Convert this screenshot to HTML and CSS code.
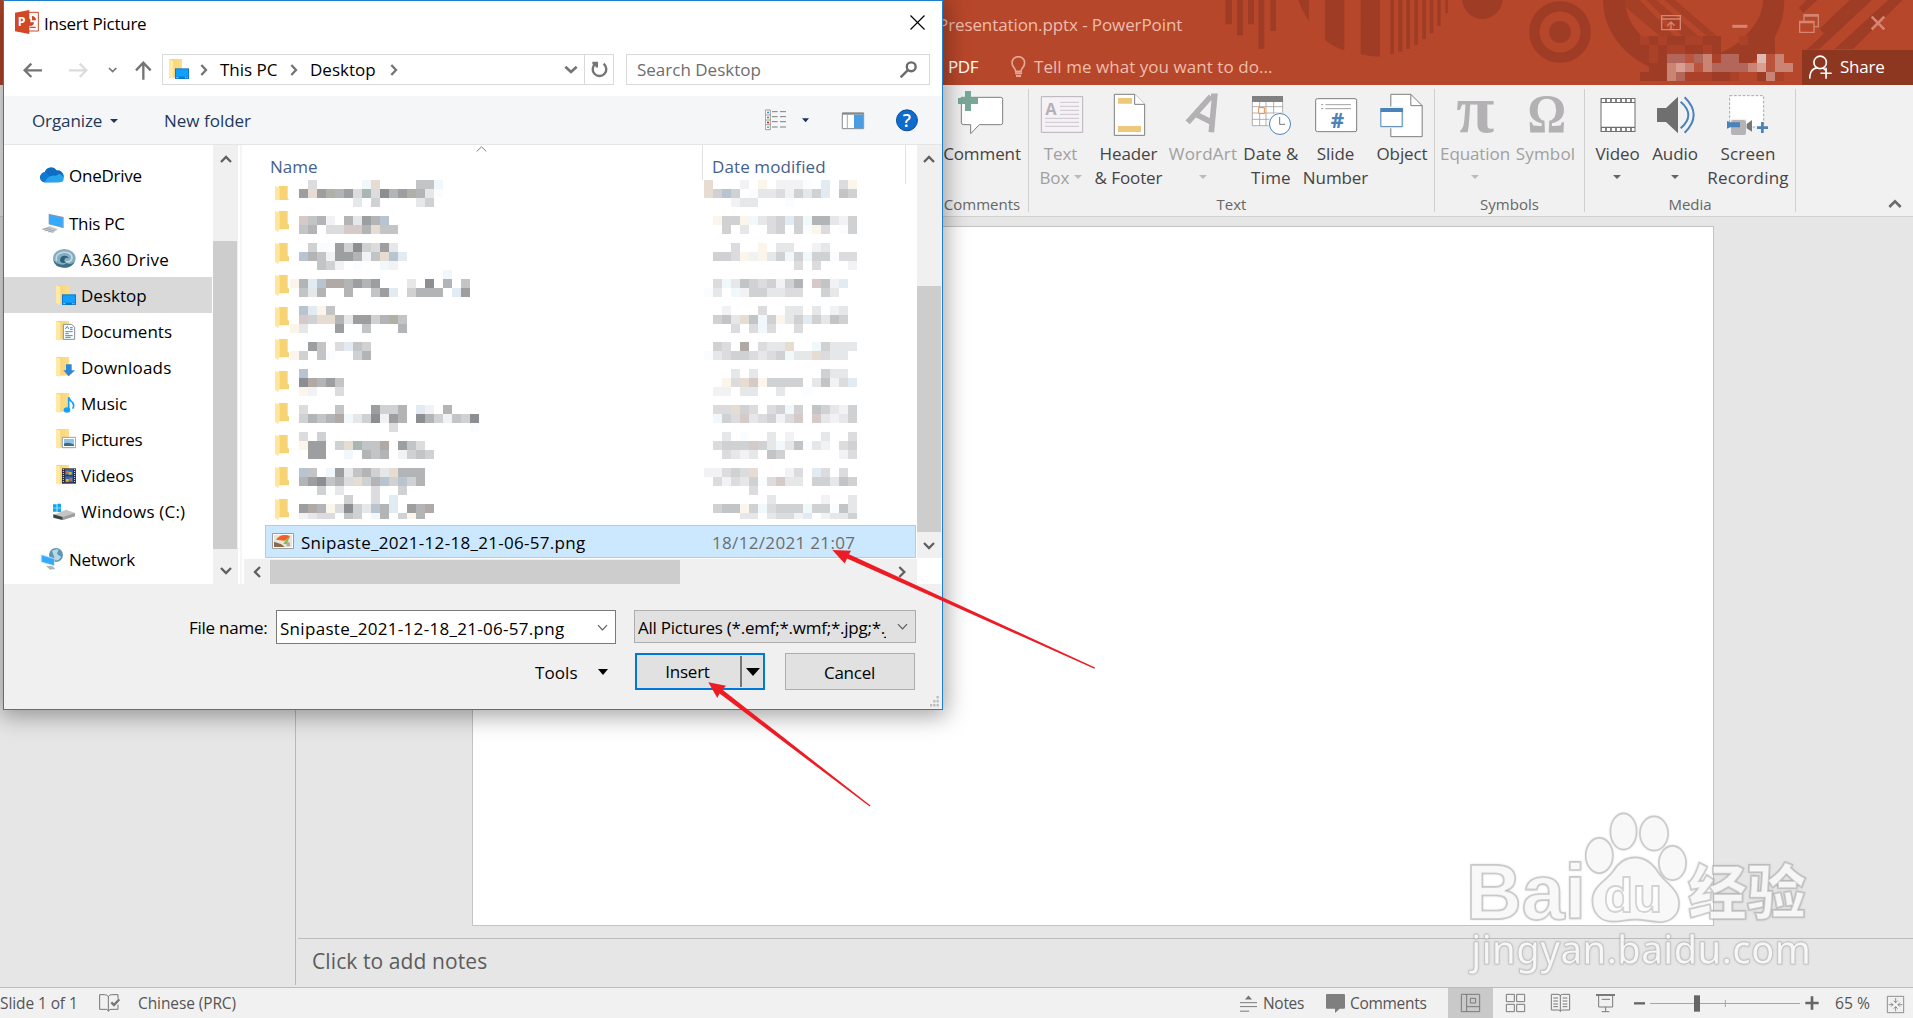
FILE: index.html
```html
<!DOCTYPE html>
<html lang="en">
<head>
<meta charset="utf-8">
<title>Presentation.pptx - PowerPoint</title>
<link rel="stylesheet" href="styles.css">
</head>
<body>
<svg class="defs" aria-hidden="true">
  <defs>
    <linearGradient id="fold" x1="0" x2="1"><stop offset="0" stop-color="#f6cf6c"/><stop offset="1" stop-color="#fcdf8c"/></linearGradient>
    <symbol id="folder" viewBox="0 0 72 72"><path d="M12 6h39v56H12z" fill="url(#fold)"/><path d="M12 6l13 5v46l-3 9-10-6z" fill="#ffe9a8"/></symbol>
    <symbol id="row-folder" viewBox="0 0 42 63"><path d="M11 0h27v37l4 5v13H11z" fill="#f8d374"/><path d="M0 0l14 5v46l-4 12-10-7z" fill="#ffe6a0"/></symbol>
    <symbol id="desk" viewBox="0 0 72 72"><use href="#folder"/><path d="M30 34h42v32H30z" fill="#0a78d0"/><path d="M33 37h36v22H33z" fill="#12a0ff"/><path d="M34 62h6M60 62h3M65 62h3" stroke="#fff" stroke-width="2"/></symbol>
    <symbol id="chev" viewBox="0 0 36 36"><path d="M3 24L18 9l15 15" fill="none" stroke="#606060" stroke-width="7"/></symbol>
    <symbol id="thin" viewBox="0 0 30 20"><path d="M2 3l13 14L28 3" fill="none" stroke="#555" stroke-width="3"/></symbol>
  </defs>
</svg>

<div class="app">
  <header class="titlebar">
    <svg class="pattern" viewBox="2820 0 2919 255">
      <g fill="#9f3c25" transform="translate(2820 0)">
        <path d="M856 0h20v73h-20zM891 0h18v106h-18zM924 0h18v73h-18zM955 0h18v146h-18zM991 0h17v93h-17z"/>
        <path d="M1075 0h32v62q-20-24-32-62zM1155 0h58v151q-36-12-58-32zM1262 0h58v170q-30 0-58-7z"/>
        <path d="M1351 0h11v163h-11zM1375 0h12v155h-12zM1399 0h11v146h-11zM1423 0h11v134h-11zM1447 0h11v118h-11zM1469 0h11v100h-11zM1492 0h10v78h-10zM1516 0h8v40h-8z"/>
      </g>
      <g transform="translate(4269 0)" fill="#9f3c25">
        <path d="M117 0h122c-4 34-30 57-61 57S121 34 117 0z"/>
        <circle cx="411" cy="96" r="77" fill="none" stroke="#9f3c25" stroke-width="31"/>
        <circle cx="411" cy="96" r="33"/>
        <path d="M540 0h66c2 60 40 110 90 138 90 50 200 40 260-20 40-36 64-76 64-118h64c0 100-60 170-130 210H700C600 170 540 90 540 0z"/>
        <path d="M606 20l130 110h40L650 0h20l120 120h50L700 0h24l130 110h30L756 0h-150z" opacity=".75"/>
        <path d="M1127 24l24-24h32l-42 38zM1190 86l90-86h38L1206 104zM1150 150L1312 0h35L1190 146zM1235 147L1395 0h44L1290 147z"/>
      </g>
    </svg>
    <div class="caption">
      <span class="doc-name">Presentation.pptx - PowerPoint</span>
      <svg class="winctl" viewBox="2130 30 750 81" fill="none" stroke="#d58673" stroke-width="4">
        <path d="M2132 47h56v42h-56zM2132 57h56M2160 88V68M2149 77l11-11 11 11"/>
        <path d="M2344 79h45" stroke-width="9"/>
        <path d="M2546 64h43v33h-43zM2546 68h43M2559 64V44h43v36h-12M2559 48h43"/>
        <path d="M2762 50l38 38M2800 50l-38 38" stroke-width="8"/>
      </svg>
    </div>
    <nav class="tabs">
      <span class="tab">PDF</span>
      <svg class="bulb" viewBox="0 0 45 66" fill="none" stroke="#e3a795" stroke-width="5"><path d="M14 46C14 36 3 34 3 20a19 18 0 0 1 38 0c0 14-11 16-11 26z"/><path d="M12 52h21M15 60h15" stroke-width="6"/></svg>
      <span class="tell">Tell me what you want to do...</span>
      <div class="share">
        <svg viewBox="0 0 70 72" fill="none" stroke="#fff" stroke-width="5"><circle cx="34" cy="22" r="19"/><path d="M2 72c0-20 10-32 24-34M42 38l8 8M52 38v34M35 55h34"/></svg>
        <span>Share</span>
      </div>
    </nav>
    <svg class="mosaic account" id="account"></svg>
  </header>

  <section class="ribbon">
    <div class="group g-comments">
      <div class="tools">
        <div class="tool"><svg viewBox="54 264 144 144"><path d="M70 292h112q6 0 6 6v70q0 6-6 6h-64l-26 27v-27H71q-7 0-7-6v-76z" fill="#fff" stroke="#7d7d7d" stroke-width="3"/><path d="M75 273h18v21h21v18H93v21H75v-21H54v-18h21z" fill="#79a898"/></svg><span>Comment</span></div>
      </div>
      <div class="glabel">Comments</div>
    </div>
    <div class="group g-text">
      <div class="tools">
        <div class="tool off"><svg viewBox="291 264 144 144"><path d="M304 290h124v107H304z" fill="#f6f1f6" stroke="#b6b2b6" stroke-width="3"/><path d="M360 307h57M360 319h57M360 331h57M360 343h57M315 355h102M315 367h102M315 379h102" stroke="#cac6ca" stroke-width="3"/><text x="316" y="344" font-size="50" font-weight="700" textLength="34" lengthAdjust="spacingAndGlyphs" fill="#b3b1b3">A</text></svg><span>Text<br>Box <i class="tri"></i></span></div>
        <div class="tool"><svg viewBox="495 264 144 144"><path d="M523 283h61l30 30v93h-91z" fill="#fff" stroke="#7d7d7d" stroke-width="3"/><path d="M584 283v30h30" fill="#fff" stroke="#7d7d7d" stroke-width="3"/><path d="M534 294h42v17h-42zM534 378h69v18h-69z" fill="#edc77b"/></svg><span>Header<br>&amp; Footer</span></div>
        <div class="tool off wide"><svg viewBox="720 264 144 144"><path d="M813 289l-70 78M813 289h11l-10 108M766 342l55 28" fill="none" stroke="#b3b1b3" stroke-width="17"/></svg><span>WordArt<br><i class="tri"></i></span></div>
        <div class="tool wide"><svg viewBox="924 264 144 144"><path d="M937 300h91v77h-91z" fill="#fff"/><path d="M937 305v72h50M959 300v77M978 300v77M1001 300v40M1028 300v40M937 320h91M937 339h91M937 358h60" fill="none" stroke="#a0a0a0" stroke-width="2.500"/><path d="M936 288h93v18h-93z" fill="#808080"/><path d="M956 323h17v17h-17z" fill="#fff" stroke="#e58a3c" stroke-width="3"/><circle cx="1020" cy="372" r="35" fill="#f1f1f1"/><circle cx="1020" cy="372" r="31.500" fill="#fff" stroke="#4a85bd" stroke-width="3"/><path d="M1019 351v22h16" fill="none" stroke="#777" stroke-width="3"/></svg><span>Date &amp;<br>Time</span></div>
        <div class="tool"><svg viewBox="1116 264 144 144"><rect x="1127" y="296" width="123" height="99" rx="5" fill="#fff" stroke="#7d7d7d" stroke-width="3"/><path d="M1143 314h7M1143 326h7M1156 314h77M1156 326h77" stroke="#a3a3a3" stroke-width="3"/><text x="1172" y="383" font-size="62" font-weight="700" textLength="40" lengthAdjust="spacingAndGlyphs" fill="#4a82ba">#</text></svg><span>Slide<br>Number</span></div>
        <div class="tool"><svg viewBox="1315.500 264 144 144"><path d="M1351 283h60l34 34v93h-94z" fill="#fff" stroke="#7d7d7d" stroke-width="3"/><path d="M1411 283v34h34" fill="none" stroke="#7d7d7d" stroke-width="3"/><path d="M1316 319h75v66h-75z" fill="#f1f1f1"/><path d="M1321 326h64v54h-64z" fill="#fff" stroke="#4a82ba" stroke-width="3"/><path d="M1320 324h67v12h-67z" fill="#4a82ba"/></svg><span>Object</span></div>
      </div>
      <div class="glabel">Text</div>
    </div>
    <div class="group g-symbols">
      <div class="tools">
        <div class="tool off"><svg viewBox="85.500 264 144 144"><text class="serif" x="98" y="396" font-size="205" textLength="114" lengthAdjust="spacingAndGlyphs">π</text></svg><span>Equation<br><i class="tri"></i></span></div>
        <div class="tool off wide"><svg viewBox="298.500 264 144 144"><text class="serif" x="312" y="396" font-size="166" textLength="116" lengthAdjust="spacingAndGlyphs">Ω</text></svg><span>Symbol</span></div>
      </div>
      <div class="glabel">Symbols</div>
    </div>
    <div class="group g-media">
      <div class="tools">
        <div class="tool"><svg viewBox="511.500 264 144 144"><path d="M531 294h105v102H531z" fill="#6f6f6f"/><path d="M534 309h99v71h-99z" fill="#fff"/><path d="M535 301.500h98M535 388.500h98" stroke="#fff" stroke-width="9" stroke-dasharray="10 5"/></svg><span>Video<br><i class="tri"></i></span></div>
        <div class="tool"><svg viewBox="684 264 144 144"><path d="M702 324h27l36-34v110l-36-34h-27z" fill="#6f6f6f"/><path d="M773 305q46 40 0 80M785 292q54 53 0 106" fill="none" stroke="#4a82ba" stroke-width="6"/></svg><span>Audio<br><i class="tri"></i></span></div>
        <div class="tool wide"><svg viewBox="903 264 144 144"><path d="M920 287h102v94H920z" fill="#fff" stroke="#a8a8a8" stroke-width="3" stroke-dasharray="8 5"/><path d="M923 356h48v50h-48zM985 385h48v20h-48z" fill="#f1f1f1"/><path d="M930 360h33q6 0 6 6v33q0 6-6 6h-33q-6 0-6-6v-33q0-6 6-6z" fill="#b5b3b5"/><path d="M971 372l16-12v35l-16-10z" fill="#777"/><path d="M912 363l10 4h29v15h-29l-10 4z" fill="#4a82ba"/><path d="M1018 366v33M1002 383h33" stroke="#4a82ba" stroke-width="8"/></svg><span>Screen<br>Recording</span></div>
      </div>
      <div class="glabel">Media</div>
    </div>
    <svg class="collapse" viewBox="0 0 40 27"><path d="M3 24L20 7l17 17" fill="none" stroke="#6a6a6a" stroke-width="8"/></svg>
  </section>

  <main class="workspace">
    <aside class="thumbs"></aside>
    <section class="editor">
      <div class="stage"><div class="slide"></div></div>
      <div class="notes">Click to add notes</div>
    </section>
  </main>

  <footer class="status">
    <span class="s-slide">Slide 1 of 1</span>
    <svg class="s-spell" viewBox="0 0 63 54" fill="none" stroke="#757575" stroke-width="3"><path d="M28 50V8Q24 2 16 2H2v44h20q4 0 6 6 2-6 8-6h21V32M28 8q3-6 10-6h19v12"/><path d="M37 25l8 8 16-17" stroke-width="7"/></svg>
    <span class="s-lang">Chinese (PRC)</span>
    <svg class="s-notes" viewBox="0 0 52 51"><path d="M15 13L26 1l11 12z" fill="#757575"/><path d="M0 23h52M0 35h52M0 49h28" stroke="#757575" stroke-width="3"/></svg>
    <span class="s-n">Notes</span>
    <svg class="s-com" viewBox="0 0 57 57"><path d="M3 0h51q3 0 3 3v38q0 3-3 3H41L27 57V44H3q-3 0-3-3V3q0-3 3-3z" fill="#7f7f7f"/></svg>
    <span class="s-c">Comments</span>
    <svg class="views" viewBox="144 24 1395 90" fill="none" stroke="#7a7a7a" stroke-width="3">
      <path d="M144 24h135v90H144z" fill="#c9c9c9" stroke="none"/>
      <path d="M184 43h55v52h-55zM200 43v52M200 80h39M211 55h16v14h-16z"/>
      <path d="M319 43h24v22h-24zM350 43h24v22h-24zM319 73h24v22h-24zM350 73h24v22h-24z"/>
      <path d="M454 43h20q7 0 7 5 0-5 7-5h21v47h-22q-6 0-6 5 0-5-6-5h-21zM481 48v44M460 54h14M460 63h14M460 72h14M460 80h14M488 54h14M488 63h14M488 72h14M488 80h14"/>
      <path d="M596 46v35h42V46M617 81v14M605 95h23M605 58h25"/><path d="M588 45h57" stroke-width="6"/>
      <path d="M702 70h33" stroke="#666" stroke-width="7"/><path d="M750 70.500h450M976 60v21" stroke="#a6a6a6"/>
      <path d="M882 46h18v49h-18z" fill="#666" stroke="none"/>
      <path d="M1216 69h40M1236 49v40" stroke="#666" stroke-width="8"/>
      <path d="M1462 49h49v49h-49zM1487 54v14M1487 80v14M1466 74h13M1494 74h13M1481 62l6 6 6-6M1481 86l6-6 6 6M1473 68l6 6-6 6M1500 68l-6 6 6 6" stroke-width="2.500"/>
      <text x="1305" y="87" font-size="48" fill="#555" stroke="none" textLength="105" lengthAdjust="spacingAndGlyphs">65 %</text>
    </svg>
  </footer>
</div>

<div class="dialog">
  <div class="d-title">
    <svg class="pp" viewBox="0 0 72 72"><path d="M36 7h34v56H36z" fill="#fff" stroke="#d24726" stroke-width="3"/><path d="M46 26a11 11 0 1 0 11 11H46z" fill="#d24726"/><path d="M51 18v13h12a12 12 0 0 0-12-13zM44 50h18v4H44z" fill="#d24726"/><path d="M0 8L43 0v72L0 64z" fill="#d24726"/><text x="8" y="49" font-size="37" font-weight="700" fill="#fff">P</text></svg>
    <span>Insert Picture</span>
    <svg class="close" viewBox="0 0 15 15"><path d="M.5.500l14 14M14.500.500l-14 14" stroke="#000" stroke-width="1.200"/></svg>
  </div>
  <div class="d-nav">
    <svg class="arrows" viewBox="60 180 405 66" fill="none" stroke="#757575" stroke-width="7"><path d="M126 211H74M94 191l-20 20 20 20"/><path d="M207 211h52M239 191l20 20-20 20" stroke="#dcdcdc"/><path d="M327 204l11 11 11-11" stroke-width="5"/><path d="M430 239v-50M408 211l22-23 22 23"/></svg>
    <div class="address">
      <svg class="loc" viewBox="12 6 60 60"><use href="#desk" width="72" height="72"/></svg>
      <svg class="gt" viewBox="0 0 24 36"><path d="M4 3l14 15L4 33" fill="none" stroke="#757575" stroke-width="7"/></svg>
      <span class="c1">This PC</span>
      <svg class="gt" viewBox="0 0 24 36"><path d="M4 3l14 15L4 33" fill="none" stroke="#757575" stroke-width="7"/></svg>
      <span class="c2">Desktop</span>
      <svg class="gt" viewBox="0 0 24 36"><path d="M4 3l14 15L4 33" fill="none" stroke="#757575" stroke-width="7"/></svg>
      <svg class="drop" viewBox="0 0 42 30"><path d="M4 5l17 16L38 5" fill="none" stroke="#757575" stroke-width="8"/></svg>
      <div class="refresh"><svg viewBox="0 0 50 50"><path d="M37 8a20 20 0 1 1-24 0M4 6h13v13" fill="none" stroke="#757575" stroke-width="7"/></svg></div>
    </div>
    <div class="search"><span>Search Desktop</span><svg viewBox="0 0 50 50" fill="none" stroke="#6b6b6b"><circle cx="33" cy="17" r="13" stroke-width="7"/><path d="M23 27L2 48" stroke-width="7"/></svg></div>
  </div>
  <div class="d-bar">
    <span class="org">Organize</span><i class="tri dark"></i><span class="newf">New folder</span>
    <svg class="layout" viewBox="885 320 460 72"><path d="M886 326h15v59h-15zM886 341h15M886 356h15M886 370h15" fill="#fff" stroke="#9a9a9a" stroke-width="3"/><path d="M906 331h17M930 331h18M906 346h17M930 346h18M906 361h17M930 361h18M906 377h17M930 377h18" stroke="#7d7d7d" stroke-width="3"/><path d="M891 331h6v5h-6z" fill="#3a8de0"/><path d="M891 346h6v5h-6z" fill="#6b9a2a"/><path d="M891 361h6v5h-6z" fill="#c22"/><path d="M891 375h6v5h-6z" fill="#7a9"/><path d="M996 351h21l-10 12z" fill="#1b2f5b"/><path d="M1117 335h64v47h-64z" fill="#fff" stroke="#888" stroke-width="3"/><path d="M1117 334h64v6h-64z" fill="#888"/><path d="M1132 338v44" stroke="#aaa" stroke-width="3"/><path d="M1152 340h27v41h-27z" fill="#4a9de2"/><circle cx="1311" cy="357" r="31.500" fill="#0d6ccd" stroke="#0a4a92" stroke-width="3"/><text x="1298" y="377" font-size="54" fill="#fff" font-weight="600">?</text></svg>
  </div>
  <div class="d-body">
    <ul class="tree">
      <li><svg viewBox="0 0 72 72"><path d="M16 58a15 15 0 0 1-2-30A20 20 0 0 1 50 22a18 18 0 0 1 6 36z" fill="#0f6cc0"/><path d="M12 58a16 16 0 0 1 4-31l30 30z" fill="#0f7ad6"/><path d="M14 58q10-24 34-20 14-12 22 6 4 14-12 14z" fill="#28a4ea"/></svg>OneDrive</li>
      <li class="gap"><svg viewBox="0 0 72 72"><path d="M26 8l45 10v34L26 40z" fill="#8a9aa8"/><path d="M29 12l39 9v27l-39-9z" fill="#35abff"/><path d="M4 54l26-8 24 8-16 13z" fill="#c3c9cd"/><path d="M8 56l20-6M14 60l20-6M24 63l20-6" stroke="#8c9499" stroke-width="2"/></svg>This PC</li>
      <li class="sub loose"><svg viewBox="0 0 72 72"><ellipse cx="37" cy="34" rx="34" ry="28" fill="#84adbf"/><path d="M4 40q4 22 32 22 24 0 32-18-12 12-24 4-8 8-20 4-12-2-20-12z" fill="#3f6e86"/><path d="M14 42q-6-22 18-26 28-2 28 18-4 14-20 10" fill="none" stroke="#c2d9e3" stroke-width="5"/><path d="M24 40q0-14 14-14 10 0 12 8-8-4-12 2-4 8 6 10-18 6-20-6z" fill="#2f6079"/></svg>A360 Drive</li>
      <li class="sub on"><svg viewBox="0 0 72 72"><use href="#desk"/></svg>Desktop</li>
      <li class="sub"><svg viewBox="0 0 72 72"><use href="#folder"/><path d="M34 16h25l9 9v36H34z" fill="#fff" stroke="#8a8f94" stroke-width="3"/><path d="M40 30l6-8 4 8M40 38h22M40 44h10M40 50h22M40 55h16M54 26h8M54 31h8" stroke="#3b8fc6" stroke-width="3" fill="none"/></svg>Documents</li>
      <li class="sub loose"><svg viewBox="0 0 72 72"><use href="#folder"/><path d="M42 28h17v18h10L50 64 34 46h8z" fill="#2f86d6"/></svg>Downloads</li>
      <li class="sub"><svg viewBox="0 0 72 72"><use href="#folder"/><ellipse cx="45" cy="57" rx="10" ry="8" fill="#12a0ff"/><path d="M50 57V19q4 10 12 16 6 8 0 18" fill="none" stroke="#12a0ff" stroke-width="5"/></svg>Music</li>
      <li class="sub tight"><svg viewBox="0 0 72 72"><use href="#folder"/><path d="M31 31h40v31H31z" fill="#fff" stroke="#9a9fa3" stroke-width="3"/><path d="M36 36h30v21H36z" fill="#8fc4ea"/><path d="M36 50q12-6 30 3v4H36z" fill="#3f6c7c"/></svg>Pictures</li>
      <li class="sub"><svg viewBox="0 0 72 72"><use href="#folder"/><path d="M30 16h42v46H30z" fill="#2f2f38"/><path d="M39 19h24v18H39zM39 40h24v18H39z" fill="#3565b5"/><path d="M42 24h8v8h-8zM52 46h8v8h-8z" fill="#d64"/><path d="M50 27h9v8h-9zM42 48h8v8h-8z" fill="#c8c038"/><path d="M34 18v42M68 18v42" stroke="#e8e8e8" stroke-width="3" stroke-dasharray="3 3"/></svg>Videos</li>
      <li class="sub loose"><svg viewBox="0 0 72 72"><path d="M3 16h11v10H3zM16 14h11v12H16zM3 28h11v10H3zM16 28h11v11H16z" fill="#12a6f2"/><path d="M4 48l38-16 27 10v10L32 63 4 56z" fill="#c3c5c7"/><path d="M4 46l28 8v9L4 56z" fill="#3c4440"/><path d="M32 54l37-12v10L32 63z" fill="#9c9ea0"/></svg>Windows (C:)</li>
      <li class="gap"><svg viewBox="0 0 72 72"><circle cx="48" cy="24" r="21" fill="#5b97b5"/><path d="M36 12q12-8 20-4-6 10-4 14l12 8q-8 12-18 10z" fill="#b7d8e4"/><path d="M2 22l42 12v24L2 46z" fill="#d8e2e8"/><path d="M5 25l37 11v19L5 44z" fill="#35abff"/><path d="M18 56l20 2 8 8-16 2z" fill="#a9b7bf"/></svg>Network</li>
    </ul>
    <div class="vscroll">
      <svg class="btn"><use href="#chev" x="7" y="9" width="12" height="12"/></svg>
      <div class="thumb t1"></div>
      <svg class="btn end flip"><use href="#chev" x="7" y="8" width="12" height="12"/></svg>
    </div>
    <div class="splitter"></div>
    <div class="files">
      <div class="cols"><span class="name">Name</span><span class="date">Date modified</span><svg class="sort" viewBox="0 0 36 20"><path d="M2 18L18 3l16 15" fill="none" stroke="#6d6d6d" stroke-width="3"/></svg></div>
      <div class="rows">
        <div class="row first"><svg viewBox="0 0 42 42"><use href="#row-folder" width="42" height="63"/></svg></div>
        <div class="row"><svg><use href="#row-folder"/></svg></div>
        <div class="row"><svg><use href="#row-folder"/></svg></div>
        <div class="row"><svg><use href="#row-folder"/></svg></div>
        <div class="row"><svg><use href="#row-folder"/></svg></div>
        <div class="row"><svg><use href="#row-folder"/></svg></div>
        <div class="row"><svg><use href="#row-folder"/></svg></div>
        <div class="row"><svg><use href="#row-folder"/></svg></div>
        <div class="row"><svg><use href="#row-folder"/></svg></div>
        <div class="row"><svg><use href="#row-folder"/></svg></div>
        <div class="row"><svg><use href="#row-folder"/></svg></div>
        <div class="row sel"><svg class="thumbpic" viewBox="0 0 66 48"><path d="M1.500 1.500h63v45h-63z" fill="#fff" stroke="#9d9d9d" stroke-width="3"/><path d="M6 6h54v36H6z" fill="#e9e4dc"/><path d="M12 20Q24 2 48 7l6 4-16 12z" fill="#f0602a"/><path d="M6 26l22 8 10 8H6z" fill="#8a6a4c"/><path d="M44 18l10-8-10 24-10-2z" fill="#86b84c"/><path d="M44 24l10 6v10H44z" fill="#b9a9a0"/></svg><span class="fname">Snipaste_2021-12-18_21-06-57.png</span><span class="fdate">18/12/2021 21:07</span></div>
        <svg class="mosaic m-names" id="names"></svg>
        <svg class="mosaic m-dates" id="dates"></svg>
      </div>
      <div class="hscroll"><svg class="hl" viewBox="0 0 36 36"><path d="M24 3L9 18l15 15" fill="none" stroke="#606060" stroke-width="7"/></svg><div class="hthumb"></div><svg class="hr" viewBox="0 0 36 36"><path d="M10 3l15 15-15 15" fill="none" stroke="#606060" stroke-width="7"/></svg></div>
    </div>
    <div class="vscroll v2">
      <svg class="btn"><use href="#chev" x="6" y="9" width="12" height="12"/></svg>
      <div class="thumb t2"></div>
      <svg class="btn end flip"><use href="#chev" x="6" y="7" width="12" height="12"/></svg>
    </div>
  </div>
  <div class="d-foot">
    <div class="f1"><label>File name:</label><div class="combo"><span>Snipaste_2021-12-18_21-06-57.png</span><svg><use href="#thin"/></svg></div><div class="filter"><span>All Pictures (*.emf;*.wmf;*.jpg;*.jpeg)</span><svg><use href="#thin"/></svg></div></div>
    <div class="f2"><span class="toolsb">Tools</span><i class="tri black"></i><div class="insert"><span>Insert</span><b><i class="tri black big"></i></b></div><div class="cancel">Cancel</div></div>
    <svg class="grip" viewBox="0 0 9 11"><path d="M6.500 0h2.300v2.500H6.500zM3.200 4h2.300v2.500H3.200zM6.500 4h2.300v2.500H6.500zM0 8h2.300v2.500H0zM3.200 8h2.300v2.500H3.200zM6.500 8h2.300v2.500H6.500z" fill="#bdbdbd"/></svg>
  </div>
</div>

<svg class="overlay" viewBox="0 0 1913 1018">
  <g fill="#ed1c24">
    <path d="M832.300 550l18.700.700-2 3.500L1095 667.500l-.6 1.200L847 558.500l-2.300 5z"/>
    <path d="M708.300 682.300l17.700 3.400-3.500 4L870.500 805.500l-.8 1.100L719.500 693.500l-2.200 4.500z"/>
  </g>
  <g class="wm">
    <text class="bai" x="1466" y="918.500" font-size="77" font-weight="700" textLength="120" lengthAdjust="spacingAndGlyphs">Bai</text>
    <ellipse cx="1599.300" cy="855.500" rx="13.500" ry="17.500"/><ellipse cx="1623.500" cy="831.500" rx="13" ry="18"/><ellipse cx="1654" cy="833.500" rx="14" ry="17"/><ellipse cx="1672.500" cy="863" rx="13.500" ry="17"/>
    <path d="M1635 857.500c12 0 19 8 24 16 6 9 20 16 20 30 0 12-9 19-20 18.500-9-.5-15-2.500-24-2.500s-14 2-22 2c-13 0-20.500-9-20.500-21 0-14 12-18 20.500-29 5-8 12-14 22-14z"/>
    <text class="du" x="1604" y="911.500" font-size="48" font-weight="700" textLength="58" lengthAdjust="spacingAndGlyphs">du</text>
    <text class="cjk" x="1688" y="914" font-size="59" textLength="118" lengthAdjust="spacingAndGlyphs">经验</text>
    <text class="url" x="1471" y="964" font-size="40" textLength="340" lengthAdjust="spacingAndGlyphs">jingyan.baidu.com</text>
  </g>
</svg>
<script src="mosaic.js"></script>
</body>
</html>
```
FILE: styles.css
```css
* { box-sizing: border-box; }
body { margin: 0; width: 1913px; height: 1018px; overflow: hidden; position: relative; background: #e6e6e6; font-family: "Open Sans", "Noto Sans", sans-serif; font-size: 17px; letter-spacing: -0.25px; white-space: nowrap; }
svg { display: block; flex: none; }
.defs { position: absolute; width: 0; height: 0; }
.tri { display: inline-block; border: 4px solid transparent; border-top-color: currentColor; border-bottom: 0; width: 0; height: 0; vertical-align: 3px; }
.app { display: grid; grid-template-rows: 85px 132px 770px 31px; height: 1018px; }

.titlebar { background: #b7472a; position: relative; display: grid; grid-template-rows: 49px 36px; }
.pattern { position: absolute; left: 940px; top: 0; width: 973px; height: 85px; }
.caption { position: relative; display: flex; align-items: center; padding-left: 938px; }
.doc-name { color: #eebdad; width: 723px; letter-spacing: -0.1px; }
.winctl { width: 250px; height: 27px; margin-top: -2px; }
.tabs { position: relative; display: flex; align-items: center; padding-left: 948px; color: #fff; line-height: 22px; }
.tabs span { margin-top: -1px; }
.tab { width: 63px; letter-spacing: -0.4px; }
.bulb { width: 15px; height: 22px; }
.tell { color: #eebdad; margin-left: 8px; width: 768px; letter-spacing: 0.05px; }
.share { width: 111px; height: 35px; background: #8e3720; display: flex; align-items: center; gap: 8px; padding-left: 7px; }
.share svg { width: 23px; height: 24px; }
.mosaic { position: absolute; shape-rendering: crispEdges; }
.account { left: 1640px; top: 36px; width: 153px; height: 45px; }

.ribbon { background: #f1f1f1; border-bottom: 1px solid #d0d0d0; display: flex; padding: 4px 0 3px 936px; position: relative; }
.group { border-right: 1px solid #d0d0d0; display: flex; flex-direction: column; height: 123px; }
.tools { display: flex; height: 105px; flex: none; }
.tool { display: flex; flex-direction: column; align-items: center; color: #444; text-align: center; line-height: 24px; letter-spacing: -0.1px; }
.tool svg { width: 48px; height: 48px; margin: -1px 0 6px; overflow: visible; }
.tool span { margin-left: -1px; }
.tool.wide { letter-spacing: 0.2px; }
.tool.wide span { margin-left: -2px; }
.tool.off { color: #a0a0a0; }
.tool .tri { border-width: 4px 4px 0; vertical-align: 5px; color: #666; }
.tool.off .tri { color: #bbb; }
.serif { font-family: "Liberation Serif", serif; font-weight: 700; fill: #b3b1b3; }
.glabel { color: #666; font-size: 15px; line-height: 20px; text-align: center; letter-spacing: 0; }
.g-comments { width: 93px; }
.g-comments .tool { width: 92px; }
.g-comments .tool span { margin-left: 0; }
.g-text { width: 406px; }
.g-text .tools { display: grid; grid-template-columns: 64px 72px 78px 58px 70px 63px; }
.g-symbols { width: 150px; }
.g-symbols .tools { display: grid; grid-template-columns: 81px 61px; }
.g-media { width: 211px; padding-left: 5px; }
.g-media .tools { display: grid; grid-template-columns: 55px 60px 86px; }
.g-media .glabel { padding-right: 5px; }
.g-media .tool span { margin-left: 0; }
.collapse { width: 14px; height: 9px; margin: 110px 0 0 92px; }

.workspace { display: grid; grid-template-columns: 296px 1fr; background: #e6e6e6; }
.thumbs { border-right: 1px solid #b9b9b9; margin-bottom: 2px; }
.editor { display: grid; grid-template-rows: 722px 1fr; padding-left: 2px; }
.stage { border-bottom: 1px solid #bcbcbc; padding: 9px 0 0 174px; }
.slide { width: 1242px; height: 700px; background: #fff; border: 1px solid #c3c3c3; }
.notes { padding-left: 14px; font-size: 21px; color: #5c5c5c; line-height: 45px; letter-spacing: 0.1px; }
.status { background: #f1f1f1; border-top: 1px solid #bcbcbc; display: flex; align-items: center; color: #555; font-size: 15.500px; letter-spacing: -0.3px; }
.s-slide { width: 99px; letter-spacing: -0.1px; }
.s-spell { width: 21px; height: 18px; }
.s-lang { margin-left: 18px; width: 1102px; letter-spacing: -0.1px; }
.s-notes { width: 17px; height: 17px; }
.s-n { margin-left: 6px; width: 63px; }
.s-com { width: 19px; height: 19px; }
.s-c { margin-left: 5px; width: 98px; }
.views { width: 465px; height: 30px; letter-spacing: 0; }

.dialog { position: absolute; left: 3px; top: 0; width: 940px; height: 710px; border: 1px solid #1f7fcf; background: #fff; box-shadow: 0 3px 22px 3px rgba(0,0,0,.36); display: grid; grid-template-rows: 52px 43px 49px 439px 1fr; color: #000; }
.d-title { display: flex; padding: 9px 0 0 11px; line-height: 28px; }
.pp { width: 24px; height: 24px; margin-right: 5px; }
.close { width: 15px; height: 15px; margin: 5px 17px 0 auto; }
.d-nav { display: flex; padding-left: 16px; }
.arrows { width: 135px; height: 22px; margin-top: 7px; margin-right: 7px; }
.address { width: 452px; height: 31px; margin-top: 1px; border: 1px solid #d9d9d9; display: flex; align-items: center; padding-left: 6px; letter-spacing: 0; }
.loc { width: 20px; height: 20px; margin-top: -2px; }
.gt { width: 8px; height: 12px; margin: 0 12px 0 11px; }
.c1 { width: 57px; margin-right: 2px; }
.c2 { width: 66px; margin-right: 3px; }
.drop { width: 14px; height: 10px; margin-left: auto; margin-right: 6px; }
.refresh { border-left: 1px solid #d9d9d9; width: 29px; height: 29px; display: grid; place-items: center; }
.refresh svg { width: 17px; height: 17px; }
.search { width: 304px; height: 31px; margin: 1px 0 0 12px; border: 1px solid #d9d9d9; display: flex; align-items: center; justify-content: space-between; padding: 0 12px 0 10px; color: #6d6d6d; letter-spacing: 0; }
.search svg { width: 17px; height: 17px; }
.d-bar { background: #f4f6f8; border-bottom: 1px solid #e4e5e7; display: flex; align-items: center; padding-left: 28px; color: #1e395b; }
.org { width: 78px; letter-spacing: -0.1px; }
.newf { margin-left: 46px; width: 601px; letter-spacing: 0; }
.layout { width: 153.300px; height: 24px; }

.d-body { display: grid; grid-template-columns: 209px 25px 6px 673px 25px; min-height: 0; background: #fff; }
.tree { list-style: none; margin: 0; padding: 12px 0 0; }
.tree li { height: 36px; display: flex; align-items: center; padding-left: 36px; gap: 5px; }
.tree svg { width: 24px; height: 24px; }
.tree li.sub { padding-left: 48px; gap: 5px; letter-spacing: 0; }
.tree li.loose { letter-spacing: 0.2px; }
.tree li.tight { letter-spacing: -0.3px; }
.tree li.gap { margin-top: 12px; }
.tree li.on { background: #d9d9d9; margin-right: 1px; }
.vscroll { background: #f0f0f0; display: flex; flex-direction: column; }
.vscroll .btn { width: 25px; height: 26px; }
.vscroll .end { margin-top: auto; }
.flip { transform: scaleY(-1); }
.thumb { background: #cdcdcd; width: 24px; }
.t1 { height: 308px; margin-top: 70px; }
.t2 { height: 246px; margin-top: 115px; }
.v2 { height: 413px; }
.splitter { border-left: 2px solid #fff; background: #f5f5f5; border-right: 2px solid #fff; }
.files { display: grid; grid-template-rows: 39px 375px 25px; min-width: 0; }
.cols { display: flex; position: relative; color: #44618c; line-height: 43px; }
.name { width: 459px; padding-left: 26px; border-right: 1px solid #e2e2e2; height: 35px; letter-spacing: 0; }
.date { padding-left: 9px; width: 203px; border-right: 1px solid #e2e2e2; letter-spacing: 0.1px; }
.sort { position: absolute; left: 232px; top: 1px; width: 11px; height: 6px; }
.rows { position: relative; padding-left: 21px; }
.row { height: 32px; padding: 6px 0 0 10px; }
.row svg { width: 14px; height: 21px; }
.row.first { height: 21px; padding-top: 2px; }
.row.first svg { height: 14px; }
.row.sel { height: 33px; width: 651px; background: #cce8ff; border: 1px solid #99d1ff; display: flex; align-items: center; padding: 0 0 0 6px; }
.row.sel .thumbpic { width: 22px; height: 16px; margin-top: -2px; }
.fname { margin: 2px 0 0 7px; width: 411px; letter-spacing: 0.3px; }
.fdate { color: #6d6d6d; margin-top: 2px; letter-spacing: 0.33px; }
.m-names { left: 46px; top: -4px; width: 189px; height: 339px; }
.m-dates { left: 460px; top: -4px; width: 153px; height: 339px; }
.hscroll { background: #f0f0f0; display: flex; align-items: center; }
.hl { width: 12px; height: 12px; margin: 0 6px 0 8px; }
.hr { width: 12px; height: 12px; margin: 0 9px 0 7px; }
.hthumb { width: 410px; height: 24px; background: #cdcdcd; margin-right: auto; }

.d-foot { background: #f0f0f0; position: relative; }
.f1 { display: flex; padding-top: 26px; line-height: 34px; }
.f1 label { width: 86px; margin-left: 185px; margin-right: 1px; line-height: 36px; height: 34px; }
.combo { width: 340px; height: 34px; border: 1px solid #7a7a7a; background: #fff; display: flex; justify-content: space-between; padding: 1px 7px 0 3px; letter-spacing: 0.3px; }
.filter { width: 282px; height: 33px; border: 1px solid #adadad; background: #e1e1e1; margin-left: 18px; display: flex; justify-content: space-between; padding: 0 7px 0 3px; line-height: 34px; letter-spacing: -0.24px; }
.filter span { width: 248px; height: 31px; overflow: hidden; }
.f1 svg { width: 11px; height: 7px; margin-top: 12px; }
.f2 { display: flex; align-items: center; padding: 9px 0 0 531px; height: 46px; }
.toolsb { width: 63px; letter-spacing: 0.1px; margin-top: 1px; }
.tri.dark { margin-bottom: -2px; }
.black { color: #000; border-width: 6px 5px 0; }
.tri.big { border-width: 8px 7px 0; }
.insert { margin-left: 27px; width: 130px; height: 37px; border: 2px solid #0078d7; background: #e1e1e1; display: flex; }
.insert span { width: 105px; padding-right: 2px; text-align: center; border-right: 2px solid #777; margin: 1px 0; line-height: 32px; height: 31px; }
.insert b { flex: 1; display: grid; place-items: center; }
.cancel { margin-left: 20px; width: 130px; height: 37px; border: 1px solid #adadad; background: #e1e1e1; text-align: center; line-height: 37px; padding-right: 1px; }
.grip { position: absolute; right: 3px; bottom: 2px; width: 9px; height: 11px; }

.overlay { position: absolute; left: 0; top: 0; width: 1913px; height: 1018px; pointer-events: none; }
.wm { fill: rgba(255,255,255,.85); stroke: rgba(150,150,150,.4); stroke-width: 1.800px; letter-spacing: 0; filter: drop-shadow(0 0 1px rgba(110,110,110,.35)); font-family: "Liberation Sans", sans-serif; }
.wm .cjk { font-family: "Noto Sans CJK SC", sans-serif; font-weight: 900; }
.wm .url { font-family: "Noto Sans", sans-serif; font-weight: 500; stroke-width: 1px; }
```
FILE: mosaic.js
```js
// Pixelated blocks: one character per 9px cell, each mapped to a colour.
const shades = {
  1: '#fafcfd', 2: '#f2f2f4', 3: '#e6e7e9', 4: '#dcdcde', 5: '#d0d1d2', 6: '#c3c4c5',
  7: '#b3b4b5', 8: '#9d9ea0', 9: '#8d8e92', w: '#fbf5ec', p: '#e6dcd1', b: '#e2eaf2',
  B: '#b8c4cf', G: '#afb1a6', M: '#b1a9a5', T: '#a9b7b3', r: '#d5cac8', l: '#f1f8fc'
};
const reds = {
  D: '#9f3c25', R: '#ab4128', a: '#b3665a', b: '#bb543d', c: '#c98474', d: '#d89e92', e: '#dfb9b2'
};
const names = [
  '..4.....lp....66l', '.8p8G784T4978G731', '.......3.5....35', '', '.r672.7387B', '.67.44rr7p66', '',
  '..5118595483', '.B76288726pBb', '...652.1..l2', '.................l', 'w7bBMM7878...3.9.7.6',
  '.637..7..68b.5777.b8', '', '.Bbw6', '.r5pp738857G6', 'w3...8..6...7', '', '..86.4b65', 'w5.61..57', '',
  '.B', '.9M786', '.w2..4', '', '.4...6...8557.b2.7', '.5767Ml359287.9752659', '...........4........1',
  '.4.5', '.w88.5pT66M.864', '..88..l.767.2565', '', '.B6.l836753p777', '.789674p57B5B57', '...5.3...4..5',
  '......5..4.b', '.8M7w4953B7b.87M', '.2344.65.l7.5w7'
];
const dates = [
  'p...2.w.2221.b.4w', 'p5B5.13342535b.65', '...233...1', '', '.w55wl345b5l77325', '..5.3..45.51w4.15', '',
  '...4..w.33..23', '.554w2w35l5l55144', '..........4.4...2', '', '.4l36545257.r62b', '13.l2553344..53', '',
  '..2...4..33.3.23', '.563p6l5w35b5365', '...4.4l4..4', '', '.54.M.433p..l5333', '134554345l33p433', '',
  '...3.3.......533', '..w4prw5555.3624b', '.22.33..3..1', '', '.44p54.45l5.65325', '.l54r34524r.r3235', '',
  '..3.1..3.2...3..4', '.4555r53l36132.45', '..4323.65......24', '', '22454p...24.b4.4', '.4243514r33.55365',
  '.....4', '.......3.....2..3', '.566w5l4555l55163', '....33.3442b.2335'
];
const account = [
  'RDRDDRRDD..RDDD', 'DRDRRDDRD...DDD', '.RDaabacRaa..ebc.', '.DDcdcbcaaaacdbcc', 'DDDcaRRRDDR..DcR'
];
function paint(id, lines, palette) {
  const svg = document.getElementById(id);
  lines.forEach((line, y) => [...line].forEach((ch, x) => {
    if (!palette[ch]) return;
    const r = document.createElementNS('http://www.w3.org/2000/svg', 'rect');
    r.setAttribute('x', x * 9);
    r.setAttribute('y', y * 9);
    r.setAttribute('width', 9);
    r.setAttribute('height', 9);
    r.setAttribute('fill', palette[ch]);
    svg.append(r);
  }));
}
paint('names', names, shades);
paint('dates', dates, shades);
paint('account', account, reds);
```
